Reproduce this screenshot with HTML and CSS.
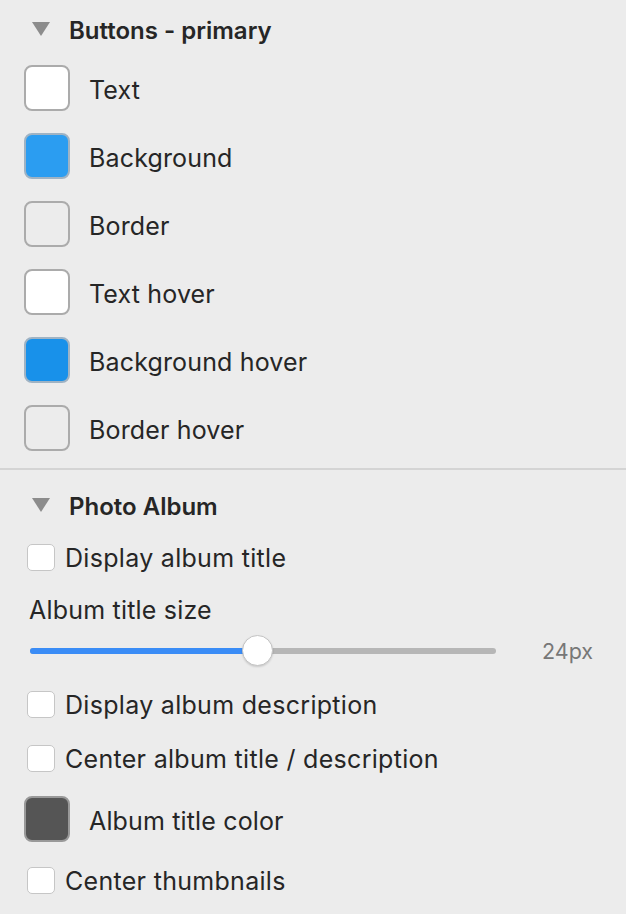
FILE: index.html
```html
<!DOCTYPE html>
<html>
<head>
<meta charset="utf-8">
<link rel="stylesheet" href="styles.css">
</head>
<body>
<div class="panel">
  <section class="group">
    <div class="group-head"><span class="tri"></span><span class="head-text">Buttons - primary</span></div>
    <div class="color-list">
      <div class="color-row"><span class="swatch sw-white"></span><span class="label">Text</span></div>
      <div class="color-row"><span class="swatch sw-blue"></span><span class="label">Background</span></div>
      <div class="color-row"><span class="swatch sw-light"></span><span class="label">Border</span></div>
      <div class="color-row"><span class="swatch sw-white"></span><span class="label">Text hover</span></div>
      <div class="color-row"><span class="swatch sw-blue2"></span><span class="label">Background hover</span></div>
      <div class="color-row"><span class="swatch sw-light"></span><span class="label">Border hover</span></div>
    </div>
  </section>
  <hr class="divider">
  <section class="group group2">
    <div class="group-head"><span class="tri"></span><span class="head-text">Photo Album</span></div>
    <div class="check-row first"><span class="check"></span><span class="label">Display album title</span></div>
    <div class="field-label">Album title size</div>
    <div class="slider-row">
      <div class="slider">
        <div class="track"></div>
        <div class="fill" style="width: 228px"></div>
        <div class="thumb" style="left: 212px"></div>
      </div>
      <span class="value">24px</span>
    </div>
    <div class="check-row after-slider"><span class="check"></span><span class="label">Display album description</span></div>
    <div class="check-row"><span class="check"></span><span class="label">Center album title / description</span></div>
    <div class="color-row"><span class="swatch sw-dark"></span><span class="label">Album title color</span></div>
    <div class="check-row"><span class="check"></span><span class="label">Center thumbnails</span></div>
  </section>
</div>
</body>
</html>
```

FILE: styles.css
```css
html, body {
  margin: 0;
  padding: 0;
  background: #ececec;
}
body {
  width: 626px;
  height: 914px;
  overflow: hidden;
  font-family: Inter, "Noto Sans", "Liberation Sans", sans-serif;
  color: #262626;
}
.panel {
  display: flex;
  flex-direction: column;
}
.group-head {
  height: 40px;
  margin-top: 10px;
  display: flex;
  align-items: center;
  padding-left: 32px;
  gap: 19px;
}
.tri {
  width: 0;
  height: 0;
  border-left: 9px solid transparent;
  border-right: 9px solid transparent;
  border-top: 14px solid #8c8c8c;
  margin-top: -2px;
}
.head-text {
  font-size: 24px;
  font-weight: 600;
  letter-spacing: 0;
}
.color-list {
  margin-top: 4px;
  display: flex;
  flex-direction: column;
}
.color-row {
  height: 68px;
  display: flex;
  align-items: center;
  padding-left: 24px;
  gap: 19px;
}
.swatch {
  width: 46px;
  height: 46px;
  box-sizing: border-box;
  border: 2px solid #ababab;
  border-radius: 8px;
  flex: none;
}
.sw-white { background: #ffffff; }
.sw-blue { background: #2b9df1; border-color: #9fb3c4; }
.sw-light { background: #ececec; }
.sw-blue2 { background: #1891ea; border-color: #9fb3c4; }
.sw-dark { background: #555555; border-color: #999999; }
.label {
  font-size: 25px;
  letter-spacing: 0.15px;
  padding-top: 3px;
}
.check-row .label {
  letter-spacing: 0.3px;
  padding-top: 2px;
}
.divider {
  margin: 6px 0 0 0;
  border: 0;
  height: 2px;
  background: #d4d4d4;
}
.group2 .group-head {
  margin-top: 16px;
}
.check-row {
  height: 54px;
  display: flex;
  align-items: center;
  padding-left: 27px;
  gap: 10px;
}
.check-row.first {
  margin-top: 4px;
}
.check-row.after-slider {
  margin-top: 5px;
}
.check {
  width: 28px;
  height: 27px;
  box-sizing: border-box;
  background: #ffffff;
  border: 1px solid #c6c6c6;
  border-radius: 5px;
  flex: none;
}
.field-label {
  height: 40px;
  margin-top: 6px;
  display: flex;
  align-items: center;
  padding-left: 29px;
  font-size: 25px;
  letter-spacing: 0.2px;
}
.slider-row {
  height: 42px;
  display: flex;
  align-items: center;
  padding-left: 30px;
}
.slider {
  position: relative;
  width: 466px;
  height: 42px;
  flex: none;
}
.track {
  position: absolute;
  left: 0;
  right: 0;
  top: 18px;
  height: 6px;
  border-radius: 3px;
  background: #b6b6b6;
}
.fill {
  position: absolute;
  left: 0;
  top: 18px;
  height: 6px;
  border-radius: 3px;
  background: #3a8cf6;
}
.thumb {
  position: absolute;
  top: 5px;
  width: 31px;
  height: 31px;
  box-sizing: border-box;
  border-radius: 50%;
  background: #ffffff;
  border: 1px solid #c4c4c4;
  box-shadow: 0 1px 2px rgba(0, 0, 0, 0.15);
}
.value {
  margin-left: 46px;
  font-size: 21.5px;
  color: #777777;
}
```
